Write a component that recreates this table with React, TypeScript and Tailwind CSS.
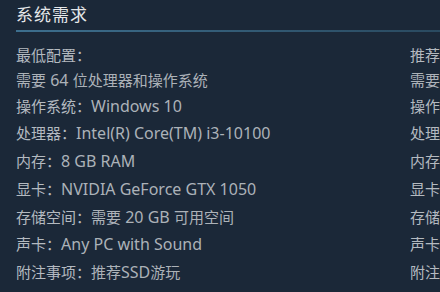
import React from "react";

const minRows: [string, string][] = [
  ["操作系统：", "Windows 10"],
  ["处理器：", "Intel(R) Core(TM) i3-10100"],
  ["内存：", "8 GB RAM"],
  ["显卡：", "NVIDIA GeForce GTX 1050"],
  ["存储空间：", "需要 20 GB 可用空间"],
  ["声卡：", "Any PC with Sound"],
  ["附注事项：", "推荐SSD游玩"],
];

const recRows: [string, string][] = [
  ["操作系统：", "Windows 10"],
  ["处理器：", "Intel(R) Core(TM) i5-10400"],
  ["内存：", "16 GB RAM"],
  ["显卡：", "NVIDIA GeForce GTX 1660"],
  ["存储空间：", "需要 20 GB 可用空间"],
  ["声卡：", "Any PC with Sound"],
  ["附注事项：", "推荐SSD游玩"],
];

function Mixed({ text }: { text: string }) {
  const parts = text.split(/([\u3000-\u9fff\uff00-\uffef]+)/).filter((p) => p.length > 0);
  return (
    <>
      {parts.map((p, i) =>
        /[\u3000-\u9fff\uff00-\uffef]/.test(p) ? (
          <span key={i} className="text-[15px]">{p}</span>
        ) : (
          <span key={i} className="text-[16px]">{p}</span>
        )
      )}
    </>
  );
}

function Col({ title, rows }: { title: string; rows: [string, string][] }) {
  return (
    <div className="w-[394px] shrink-0 flex flex-col">
      <div className="h-[26px] leading-[26px] text-[#b4bac0]">
        <Mixed text={title} />
      </div>
      <div className="h-[24.5px] leading-[24.5px] text-[#acb2b8]">
        <Mixed text="需要 64 位处理器和操作系统" />
      </div>
      {rows.map(([k, v]) => (
        <div key={k} className="h-[27.8px] leading-[27.8px] whitespace-nowrap">
          <span className="text-[#b4bac0]">
            <Mixed text={k} />
          </span>
          <span className="text-[#acb2b8]">
            <Mixed text={v} />
          </span>
        </div>
      ))}
    </div>
  );
}

export default function App() {
  return (
    <div
      className="w-[440px] h-[292px] overflow-hidden bg-[#1b2838] pl-4"
      style={{ fontFamily: '"Noto Sans", "Noto Sans CJK SC", sans-serif' }}
    >
      <div className="pt-[3px] text-[17px] leading-[24px] tracking-[1px] text-[#e5e7e9]">系统需求</div>
      <div className="mt-[3px] h-[2px] bg-gradient-to-r from-[#3d6f8e] to-[#2a4a60]" />
      <div className="mt-[10px] flex whitespace-nowrap">
        <Col title="最低配置：" rows={minRows} />
        <Col title="推荐配置：" rows={recRows} />
      </div>
    </div>
  );
}
